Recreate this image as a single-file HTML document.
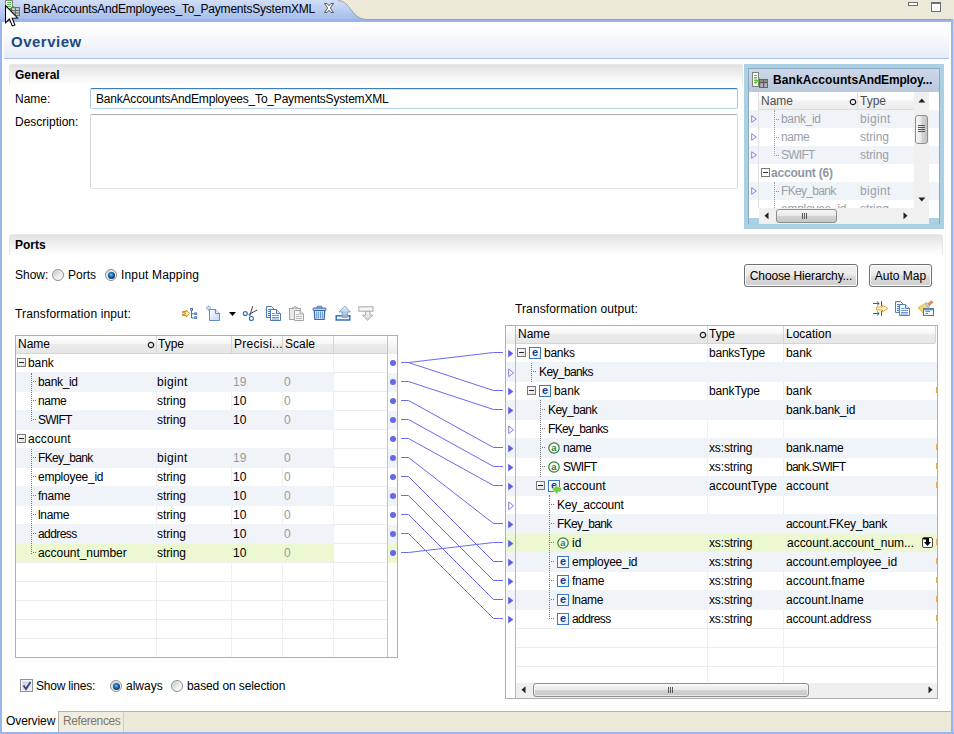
<!DOCTYPE html>
<html><head><meta charset="utf-8"><title>Overview</title><style>
*{box-sizing:border-box;margin:0;padding:0}
html,body{width:954px;height:734px;overflow:hidden;background:#ece9d8}
body{font-family:"Liberation Sans",sans-serif;font-size:12px;color:#000;position:relative}
.a{position:absolute}
.t{position:absolute;white-space:nowrap;line-height:14px;height:14px}
.g{color:#9a9a9a}
.hd{position:absolute;background:linear-gradient(#ffffff 0%,#f6f6f6 45%,#ebebeb 50%,#e6e6e6 100%);border-bottom:1px solid #d5d5d5}
.vl{position:absolute;width:1px;background:#f0f0f0}
.hl{position:absolute;height:1px;background:#ededed}
.hs{position:absolute;height:1px;width:3px;background:repeating-linear-gradient(90deg,#747474 0,#747474 1px,transparent 1px,transparent 2px)}
.sh{position:absolute;background:#f0f3f8}
.sel{position:absolute;background:#ebf8d2}
</style></head><body>
<svg class="a" style="left:0;top:0" width="954" height="22" viewBox="0 0 954 22">
<defs><linearGradient id="tg" x1="0" y1="0" x2="0" y2="1"><stop offset="0" stop-color="#d2def7"/><stop offset="1" stop-color="#9db8ec"/></linearGradient></defs>
<rect x="0" y="0" width="954" height="22" fill="#ece9d8"/>
<path d="M0,0 L338,0 C350,0 352,19 366,19 L954,19 L954,22 L0,22 Z" fill="url(#tg)"/>
<rect x="0" y="19" width="954" height="3" fill="#99b5ec"/>
<path d="M338,0.5 C350,0.5 352,19.5 366,19.5 L954,19.5" fill="none" stroke="#9c9a8c" stroke-width="1" opacity=".8"/>
</svg>
<div class="a" style="left:0;top:19px;width:2px;height:715px;background:#99b5ec"></div>
<div class="a" style="left:951px;top:19px;width:2px;height:715px;background:#99b5ec"></div>
<div class="a" style="left:953px;top:19px;width:1px;height:715px;background:#c5d3ee"></div>
<div class="a" style="left:0;top:732px;width:954px;height:2px;background:#99b5ec"></div>
<div class="a" style="left:2px;top:22px;width:949px;height:689px;background:#fff"></div>
<div class="a" style="left:4px;top:22px;width:945px;height:36px;background:linear-gradient(#ffffff 0%,#fbfcfe 30%,#e6ecf6 100%)"></div>
<div class="a" style="left:4px;top:58px;width:945px;height:1px;background:#aec2e4"></div>
<div class="t" style="left:11px;top:32px;font-size:15px;letter-spacing:.5px;font-weight:bold;color:#1c4a82;line-height:20px;height:20px">Overview</div>
<div class="t" style="left:23px;top:2px;letter-spacing:-0.21px">BankAccountsAndEmployees_To_PaymentsSystemXML</div>
<svg class="a" style="left:3px;top:0" width="18" height="18" viewBox="0 0 18 18">
<rect x="2.5" y="0.5" width="7" height="11" fill="#fff" stroke="#7a8a7a"/>
<rect x="4" y="2" width="4" height="1" fill="#4cb848"/><rect x="4" y="4" width="4" height="1" fill="#4cb848"/><rect x="4" y="6" width="4" height="1" fill="#4cb848"/>
<path d="M6,8 h4 v-2 l4,3 l-4,3 v-2 h-4z" fill="#3aa83a"/>
<rect x="8.5" y="7.5" width="8" height="8" fill="#c4c4c4" stroke="#6e6e6e"/><path d="M8.500,10.500h8M8.500,13h8M12.500,7.500v8" stroke="#6e6e6e"/>
</svg>
<svg class="a" style="left:323px;top:2px" width="12" height="12" viewBox="0 0 12 12"><path d="M1.500,1.500 H4 L6,3.800 L8,1.500 H10.500 L7.300,6 L10.500,10.500 H8 L6,8.200 L4,10.500 H1.500 L4.700,6 Z" fill="#ffffff" stroke="#5a5a5a" stroke-width="1" stroke-linejoin="round"/></svg>
<div class="a" style="left:908px;top:2px;width:10px;height:4px;border:1px solid #6f6f6f;background:#fff"></div>
<div class="a" style="left:931px;top:2px;width:10px;height:10px;border:1px solid #6f6f6f;border-top-width:2px;background:#fff"></div>
<svg class="a" style="left:5px;top:5px" width="13.6" height="23" viewBox="0 0 13 22"><path d="M0.5,0.5 L0.5,17 L4.2,13.4 L7,20 L9.5,19 L6.8,12.6 L12,12.4 Z" fill="#fff" stroke="#000" stroke-width="1"/></svg>
<div class="a" style="left:9px;top:64px;width:734px;height:21px;border-radius:3px 3px 0 0;border:1px solid #e8e8e8;border-bottom:none;background:linear-gradient(#e2e2e2 0%,#f4f4f4 60%,#ffffff 100%)"></div>
<div class="t" style="left:15px;top:68px;font-weight:bold">General</div>
<div class="t" style="left:15px;top:92px">Name:</div>
<div class="a" style="left:90px;top:88px;width:648px;height:21px;border:1px solid #a9c8e6;border-top-color:#3f7fb5;border-bottom-color:#b5d3ee;border-radius:2px;background:#fff;box-shadow:inset 0 1px 0 0 #dbe8f5"></div>
<div class="t" style="left:96px;top:92px;letter-spacing:-0.2px">BankAccountsAndEmployees_To_PaymentsSystemXML</div>
<div class="t" style="left:15px;top:115px">Description:</div>
<div class="a" style="left:90px;top:114px;width:648px;height:75px;border:1px solid #dadada;border-top-color:#ababab;border-bottom-color:#e3e3e3;border-radius:2px;background:#fff"></div>
<div class="a" style="left:744px;top:64px;width:200px;height:165px;background:#a9d1e3"></div>
<div class="a" style="left:748px;top:68px;width:192px;height:156px;background:#fff;border:1px solid #8fa9c4"></div>
<div class="a" style="left:749px;top:69px;width:190px;height:23px;background:linear-gradient(#cdd8e8,#b9c7dc)"></div>
<div class="t" style="left:773px;top:73px;font-weight:bold"><span style="letter-spacing:0.10px">BankAccounts</span><span style="letter-spacing:-0.16px">AndEmploy...</span></div>
<svg class="a" style="left:751px;top:72px" width="18" height="18" viewBox="0 0 18 18">
<rect x="1.5" y="0.5" width="6" height="14" fill="#fff" stroke="#7c837c"/>
<rect x="3" y="3" width="3" height="1" fill="#6cc24a"/><rect x="3" y="5" width="3" height="1.500" fill="#6cc24a"/><rect x="3" y="7.500" width="3" height="1.500" fill="#6cc24a"/><rect x="3" y="10" width="3" height="1.500" fill="#6cc24a"/>
<path d="M4,7.800 h4 v-2 l4,3 l-4,3 v-2 h-4z" fill="#5cc040"/>
<rect x="8.500" y="7.500" width="8" height="8" fill="#8c8c8c" stroke="#666"/><path d="M8.500,10.500h8M12.500,7.500v8" stroke="#5c5c5c"/><rect x="9.500" y="11.500" width="2.500" height="3.500" fill="#b5b5b5"/><rect x="13.500" y="11.500" width="2.500" height="3.500" fill="#b5b5b5"/>
</svg>
<div class="a" style="left:759px;top:92px;width:155px;height:18px;background:linear-gradient(#ffffff 0%,#fbfbfb 45%,#f1f1f1 55%,#ededed 100%);border-bottom:1px solid #dedede"></div>
<div class="a" style="left:857px;top:93px;width:1px;height:16px;background:#dadada"></div>
<div class="t" style="left:761px;top:94px;color:#4f4f4f">Name</div>
<div class="t" style="left:860px;top:94px;color:#4f4f4f">Type</div>
<svg class="a" style="left:849px;top:98px" width="8" height="8" viewBox="0 0 8 8"><circle cx="4" cy="4" r="2.700" fill="none" stroke="#1a1a1a" stroke-width="1.200"/></svg>
<div class="sh" style="left:749px;top:110px;width:190px;height:18px"></div>
<div class="t" style="left:781px;top:112px;color:#9aa0a8;letter-spacing:-0.34px">bank_id</div>
<div class="t" style="left:860px;top:112px;color:#9aa0a8;letter-spacing:0.32px">bigint</div>
<svg class="a" style="left:751px;top:115px" width="7" height="8" viewBox="0 0 7 8"><path d="M0.700,0.800 L5.400,4 L0.700,7.200 Z" fill="#fff" stroke="#7272ee" stroke-width=".9"/></svg>
<div class="t" style="left:781px;top:130px;color:#9aa0a8;letter-spacing:-0.44px">name</div>
<div class="t" style="left:860px;top:130px;color:#9aa0a8;letter-spacing:-0.07px">string</div>
<svg class="a" style="left:751px;top:133px" width="7" height="8" viewBox="0 0 7 8"><path d="M0.700,0.800 L5.400,4 L0.700,7.200 Z" fill="#fff" stroke="#7272ee" stroke-width=".9"/></svg>
<div class="sh" style="left:749px;top:146px;width:190px;height:18px"></div>
<div class="t" style="left:781px;top:148px;color:#9aa0a8;letter-spacing:-0.75px">SWIFT</div>
<div class="t" style="left:860px;top:148px;color:#9aa0a8;letter-spacing:-0.07px">string</div>
<svg class="a" style="left:751px;top:151px" width="7" height="8" viewBox="0 0 7 8"><path d="M0.700,0.800 L5.400,4 L0.700,7.200 Z" fill="#fff" stroke="#7272ee" stroke-width=".9"/></svg>
<div class="t" style="left:771px;top:166px;color:#8f97a3;font-weight:bold;letter-spacing:-.2px">account (6)</div>
<div class="a" style="left:761px;top:168px;width:9px;height:9px;border:1px solid #7a7a7a;background:#fff"></div><div class="a" style="left:763px;top:172px;width:5px;height:1px;background:#333"></div>
<div class="sh" style="left:749px;top:182px;width:190px;height:18px"></div>
<div class="t" style="left:781px;top:184px;color:#9aa0a8;letter-spacing:-0.69px">FKey_bank</div><div class="t" style="left:860px;top:184px;color:#9aa0a8;letter-spacing:0.32px">bigint</div>
<svg class="a" style="left:751px;top:187px" width="7" height="8" viewBox="0 0 7 8"><path d="M0.700,0.800 L5.400,4 L0.700,7.200 Z" fill="#fff" stroke="#7272ee" stroke-width=".9"/></svg>
<div class="a" style="left:759px;top:200px;width:155px;height:8px;overflow:hidden"><div class="t" style="left:22px;top:2px;color:#9aa0a8;letter-spacing:-0.25px">employee_id</div><div class="t" style="left:101px;top:2px;color:#9aa0a8;letter-spacing:-0.07px">string</div></div>
<div class="a" style="left:749px;top:218px;width:10px;height:6px;background:#a9d1e3"></div>
<div class="a" style="left:929px;top:218px;width:10px;height:6px;background:#a9d1e3"></div>
<div class="a" style="left:774px;top:110px;width:0;height:46px;border-left:1px dotted #a0a0a0"></div>
<div class="a" style="left:774px;top:182px;width:0;height:26px;border-left:1px dotted #a0a0a0"></div>
<div class="hs" style="left:776px;top:119px;opacity:.8"></div>
<div class="hs" style="left:776px;top:137px;opacity:.8"></div>
<div class="hs" style="left:776px;top:155px;opacity:.8"></div>
<div class="hs" style="left:776px;top:191px;opacity:.8"></div>
<div class="a" style="left:758px;top:92px;width:1px;height:116px;background:#e3e3e3"></div>
<div class="a" style="left:914px;top:92px;width:15px;height:132px;background:#f0f0f0"></div>
<div class="a" style="left:915px;top:115px;width:13px;height:29px;border:1px solid #8e8e8e;border-radius:3px;background:linear-gradient(90deg,#f6f6f6 0%,#e9e9e9 48%,#d4d4d4 52%,#c6c6c6 100%)"></div>
<div class="a" style="left:918px;top:125px;width:7px;height:1px;background:#555"></div>
<div class="a" style="left:918px;top:127px;width:7px;height:1px;background:#555"></div>
<div class="a" style="left:918px;top:129px;width:7px;height:1px;background:#555"></div>
<div class="a" style="left:918px;top:131px;width:7px;height:1px;background:#555"></div>
<svg class="a" style="left:918px;top:98px" width="8" height="5"><path d="M0.300,4.500 L3.800,0.500 L7.300,4.500 Z" fill="#222"/></svg>
<svg class="a" style="left:918px;top:197px" width="8" height="5"><path d="M0.300,0.500 L3.800,4.500 L7.300,0.500 Z" fill="#222"/></svg>
<div class="a" style="left:759px;top:208px;width:155px;height:16px;background:#f0f0f0"></div>
<div class="a" style="left:776px;top:209px;width:61px;height:14px;border:1px solid #8e8e8e;border-radius:3px;background:linear-gradient(#f6f6f6 0%,#e9e9e9 48%,#d4d4d4 52%,#c6c6c6 100%)"></div>
<div class="a" style="left:802px;top:213px;width:1px;height:6px;background:#555"></div>
<div class="a" style="left:804px;top:213px;width:1px;height:6px;background:#555"></div>
<div class="a" style="left:806px;top:213px;width:1px;height:6px;background:#555"></div>
<svg class="a" style="left:764px;top:212px" width="5" height="8"><path d="M4.500,0.300 L0.500,3.800 L4.500,7.300 Z" fill="#222"/></svg>
<svg class="a" style="left:903px;top:212px" width="5" height="8"><path d="M0.500,0.300 L4.500,3.800 L0.500,7.300 Z" fill="#222"/></svg>
<div class="a" style="left:9px;top:234px;width:934px;height:21px;border-radius:3px 3px 0 0;border:1px solid #e8e8e8;border-bottom:none;background:linear-gradient(#e2e2e2 0%,#f4f4f4 60%,#ffffff 100%)"></div>
<div class="t" style="left:15px;top:238px;font-weight:bold">Ports</div>
<div class="t" style="left:15px;top:268px">Show:</div>
<div class="a" style="left:52px;top:269px;width:12px;height:12px;border:1px solid #8a8c8e;border-radius:50%;background:linear-gradient(135deg,#c3c8cd 10%,#e6e8ea 50%,#fafafa 85%);box-shadow:inset 0 0 0 1px rgba(255,255,255,.55)"></div>
<div class="t" style="left:68px;top:268px">Ports</div>
<div class="a" style="left:105px;top:269px;width:12px;height:12px;border:1px solid #8a8c8e;border-radius:50%;background:linear-gradient(135deg,#c3c8cd 10%,#e6e8ea 50%,#fafafa 85%);box-shadow:inset 0 0 0 1px rgba(255,255,255,.55)"></div>
<div class="a" style="left:107.5px;top:271.5px;width:7px;height:7px;border-radius:50%;background:radial-gradient(circle at 45% 40%,#6fd2f5 0%,#2478be 30%,#0f3f78 62%,#0a2548 100%)"></div>
<div class="t" style="left:121px;top:268px;letter-spacing:.16px">Input Mapping</div>
<div class="a" style="left:744px;top:264px;width:114px;height:23px;border:1px solid #707070;border-radius:3px;background:linear-gradient(#f2f2f2 0%,#ebebeb 48%,#dddddd 52%,#cfcfcf 100%);box-shadow:inset 0 0 0 1px #fcfcfc;text-align:center;line-height:23px;letter-spacing:-0.15px">Choose Hierarchy...</div>
<div class="a" style="left:869px;top:264px;width:63px;height:23px;border:1px solid #707070;border-radius:3px;background:linear-gradient(#f2f2f2 0%,#ebebeb 48%,#dddddd 52%,#cfcfcf 100%);box-shadow:inset 0 0 0 1px #fcfcfc;text-align:center;line-height:23px;letter-spacing:0px">Auto Map</div>
<div class="t" style="left:15px;top:307px;letter-spacing:.14px">Transformation input:</div>
<div class="t" style="left:515px;top:302px;letter-spacing:.12px">Transformation output:</div>
<svg class="a" style="left:181px;top:305px" width="17" height="16" viewBox="0 0 17 16" ><path d="M1.500,6.500 H5.300 V5 L8.600,8.500 L5.300,12 V10.500 H1.500 V9.300 H4.300 V7.700 H1.500 Z" fill="#fff3a8" stroke="#c08418" stroke-width=".9" stroke-linejoin="miter"/><path d="M10.500,5.500 V13 H13.500 M10.500,8.800 H13.500" fill="none" stroke="#4472b8" stroke-width="1"/><g fill="#4472b8"><rect x="9.200" y="3" width="2.800" height="2.800"/><rect x="13.300" y="7.400" width="2.800" height="2.600"/><rect x="13.300" y="11.300" width="2.800" height="2.600"/></g><g fill="#b9cdea"><rect x="10.100" y="3.900" width="1" height="1"/><rect x="14.200" y="8.200" width="1" height="1"/><rect x="14.200" y="12.100" width="1" height="1"/></g></svg>
<svg class="a" style="left:205px;top:304px" width="16" height="18" viewBox="0 0 16 18" ><defs><linearGradient id="nd" x1="0" y1="0" x2="1" y2="1"><stop offset="0" stop-color="#ffffff"/><stop offset="1" stop-color="#c4d6f0"/></linearGradient></defs><path d="M4.500,5.500 H10.500 L14.500,9.500 V16.500 H4.500 Z" fill="url(#nd)" stroke="#5580b8" stroke-width=".9"/><path d="M10.500,5.500 V9.500 H14.500" fill="#e9f0fa" stroke="#5580b8" stroke-width=".9"/><path d="M3.500,1.500 V6.500 M1,4 H6 M1.700,2.200 L5.300,5.800 M5.300,2.200 L1.700,5.800" stroke="#5a90d0" stroke-width=".8"/><rect x="2.700" y="3.200" width="1.600" height="1.600" fill="#fff"/></svg>
<svg class="a" style="left:229px;top:312px" width="7" height="4" viewBox="0 0 7 4" ><path d="M0,0 H7 L3.500,4 Z" fill="#000"/></svg>
<svg class="a" style="left:242px;top:305px" width="17" height="17" viewBox="0 0 17 17" ><path d="M10.700,1.200 L7.600,11.200 M15.200,5 L6.500,9.600" stroke="#3a4056" stroke-width="1" fill="none"/><circle cx="3.300" cy="8.600" r="2" fill="#fff" stroke="#2f6fb5" stroke-width="1.100"/><circle cx="9.400" cy="13.500" r="2" fill="#fff" stroke="#2f6fb5" stroke-width="1.100"/></svg>
<svg class="a" style="left:266px;top:305px" width="16" height="17" viewBox="0 0 16 17" ><path d="M0.500,1.500 H5.500 L8.500,4.500 V12.500 H0.500 Z" fill="#f3f7fd" stroke="#4b78b3"/><path d="M2,4.500H5M2,6.500H4M2,8.500H4M2,10.500H4" stroke="#4b78b3"/><path d="M4.500,4.500 H10.500 L14.500,8.500 V15.500 H4.500 Z" fill="#fbfdff" stroke="#4b78b3"/><path d="M10.500,4.500 V8.500 H14.500" fill="#dbe7f7" stroke="#4b78b3"/><path d="M6,8.500H9.500M6,10.500H13M6,12.500H13M6,14H13" stroke="#5c8cd0" stroke-width=".9"/></svg>
<svg class="a" style="left:289px;top:305px" width="16" height="17" viewBox="0 0 16 17" ><rect x="0.500" y="3.500" width="11" height="11" fill="#e9e9e9" stroke="#a3a3a3"/><path d="M3.500,3.500 V2.500 H4.700 Q6,0.300 7.300,2.500 H8.500 V3.500" fill="#dcdcdc" stroke="#a3a3a3"/><path d="M5.500,5.500 H11 L14.500,9 V15.500 H5.500 Z" fill="#f7f7f7" stroke="#a3a3a3"/><path d="M11,5.500 V9 H14.500" fill="#e6e6e6" stroke="#a3a3a3"/><path d="M7,9.500H10M7,11.500H13M7,13.500H13" stroke="#b5b5b5" stroke-width=".9"/></svg>
<svg class="a" style="left:312px;top:305px" width="15" height="16" viewBox="0 0 15 16" ><rect x="5" y="1.200" width="5" height="2" rx="0.800" fill="#b7cdea" stroke="#3b69ad" stroke-width=".8"/><rect x="1" y="3" width="13" height="2.500" rx="0.800" fill="#b7cdea" stroke="#3b69ad" stroke-width="1"/><path d="M2.300,5.500 H12.700 L12.200,14.500 H2.800 Z" fill="#dbe8fa" stroke="#3b69ad" stroke-width="1.200"/><path d="M4.700,6.500V13.500M6.600,6.500V13.500M8.500,6.500V13.500M10.400,6.500V13.500" stroke="#5c8cd0" stroke-width=".9"/></svg>
<svg class="a" style="left:335px;top:305px" width="17" height="17" viewBox="0 0 17 17" ><defs><linearGradient id="ua" x1="0" y1="0" x2="0" y2="1"><stop offset="0" stop-color="#eef4fb"/><stop offset="1" stop-color="#8fb0da"/></linearGradient></defs><rect x="1.200" y="10.800" width="13.600" height="4.200" fill="#eaf1fa" stroke="#2f66b8" stroke-width="1.400"/><path d="M9.700,1 L15.300,7 H12.300 V12.300 H7.100 V7 H4.100 Z" fill="url(#ua)" stroke="#7f9abf" stroke-width=".9"/></svg>
<svg class="a" style="left:358px;top:305px" width="16" height="17" viewBox="0 0 16 17" ><defs><linearGradient id="da" x1="0" y1="0" x2="0" y2="1"><stop offset="0" stop-color="#fafafa"/><stop offset="1" stop-color="#d2d2d2"/></linearGradient></defs><path d="M7.600,6 H12 V10.200 H15 L9.500,15.300 L4.300,10.200 H7.600 Z" fill="url(#da)" stroke="#a8a8a8" stroke-width=".9"/><rect x="0.800" y="1.800" width="14.200" height="4.400" fill="#f6f6f6" stroke="#a9a9a9" stroke-width="1"/></svg>
<svg class="a" style="left:872px;top:300px" width="17" height="17" viewBox="0 0 17 17" ><path d="M1,3.500 H7 M5,1.500 L7.200,3.500 L5,5.500 M9.500,1 V6" fill="none" stroke="#3e5f8a" stroke-width="1"/><path d="M1,13.500 H7 M5,11.500 L7.200,13.500 L5,15.500 M9.500,11 V16" fill="none" stroke="#3e5f8a" stroke-width="1"/><path d="M4.500,7 H10.500 V5.200 L15.800,8.500 L10.500,11.800 V10 H4.500 Z" fill="#fff6c4" stroke="#dc9a28" stroke-width=".9"/></svg>
<svg class="a" style="left:895px;top:300px" width="16" height="17" viewBox="0 0 16 17" ><path d="M0.500,1.500 H5.500 L8.500,4.500 V12.500 H0.500 Z" fill="#f3f7fd" stroke="#5580b5"/><path d="M2,4.500H5M2,6.500H4M2,8.500H4M2,10.500H4" stroke="#4b78b3"/><path d="M4.500,4.500 H10.500 L14.500,8.500 V15.500 H4.500 Z" fill="#fbfdff" stroke="#5580b5"/><path d="M10.500,4.500 V8.500 H14.500" fill="#dbe7f7" stroke="#5580b5"/><path d="M6,8.500H9.500M6,10.500H13M6,12.500H13M6,14H13" stroke="#5c8cd0" stroke-width=".9"/></svg>
<svg class="a" style="left:917px;top:300px" width="18" height="17" viewBox="0 0 18 17" ><path d="M1,8 L8,3.500 L11.500,7.500 L6,13 Q4,10 1,8 Z" fill="#f5d77a" stroke="#d8a838" stroke-width=".8"/><path d="M8,3.500 L9.500,2.200 L13,6 L11.500,7.500 Z" fill="#c9cdd3" stroke="#9aa0a8" stroke-width=".6"/><path d="M11,3.500 L14.500,0.800 L16,2.300 L12.500,5.300 Z" fill="#f08a4a" stroke="#c86428" stroke-width=".6"/><rect x="6.500" y="8.500" width="10" height="7" fill="#f4f8fd" stroke="#4b78b3"/><rect x="6.500" y="8.500" width="10" height="1.500" fill="#6f98d0" stroke="#4b78b3" stroke-width=".6"/><path d="M8.500,11.500H13M8.500,13.500H11" stroke="#5c8cd0"/></svg>
<div class="a" style="left:15px;top:335px;width:383px;height:323px;background:#fff;border:1px solid #b0b0b0"></div>
<div class="hd" style="left:16px;top:336px;width:372px;height:18px"></div>
<div class="a" style="left:388px;top:336px;width:9px;height:18px;background:linear-gradient(#fff,#ebebeb)"></div>
<div class="a" style="left:156px;top:336px;width:1px;height:17px;background:#d5d5d5"></div>
<div class="vl" style="left:156px;top:354px;height:303px"></div>
<div class="a" style="left:231px;top:336px;width:1px;height:17px;background:#d5d5d5"></div>
<div class="vl" style="left:231px;top:354px;height:303px"></div>
<div class="a" style="left:282px;top:336px;width:1px;height:17px;background:#d5d5d5"></div>
<div class="vl" style="left:282px;top:354px;height:303px"></div>
<div class="a" style="left:333px;top:336px;width:1px;height:17px;background:#d5d5d5"></div>
<div class="vl" style="left:333px;top:354px;height:303px"></div>
<div class="a" style="left:387px;top:336px;width:1px;height:321px;background:#c4c4c4"></div>
<div class="t" style="left:18px;top:337px">Name</div><div class="t" style="left:158px;top:337px">Type</div><div class="t" style="left:234px;top:337px;letter-spacing:.3px">Precisi...</div><div class="t" style="left:285px;top:337px">Scale</div>
<svg class="a" style="left:147px;top:341px" width="8" height="8" viewBox="0 0 8 8"><circle cx="4" cy="4" r="2.700" fill="none" stroke="#1a1a1a" stroke-width="1.200"/></svg>
<div class="a" style="left:16px;top:354px;width:317px;height:18px;background:#fff"></div>
<div class="a" style="left:17px;top:358px;width:9px;height:9px;border:1px solid #7a7a7a;background:linear-gradient(135deg,#fff,#e0e0e0)"></div><div class="a" style="left:19px;top:362px;width:5px;height:1px;background:#222"></div>
<div class="t" style="left:28px;top:356px;letter-spacing:-0.11px">bank</div>
<div class="a" style="left:390px;top:360px;width:6px;height:6px;border-radius:50%;background:#6767ec"></div>
<div class="sh" style="left:16px;top:372px;width:317px;height:20px"></div>
<div class="sh" style="left:388px;top:373px;width:9px;height:19px"></div>
<div class="t" style="left:38px;top:375px;letter-spacing:-0.34px">bank_id</div>
<div class="t" style="left:157px;top:375px;letter-spacing:0.32px">bigint</div>
<div class="t g" style="left:233px;top:375px">19</div>
<div class="t g" style="left:284px;top:375px">0</div>
<div class="hs" style="left:33px;top:381px"></div>
<div class="a" style="left:390px;top:379px;width:6px;height:6px;border-radius:50%;background:#6767ec"></div>
<div class="t" style="left:38px;top:394px;letter-spacing:-0.44px">name</div>
<div class="t" style="left:157px;top:394px;letter-spacing:-0.07px">string</div>
<div class="t" style="left:233px;top:394px">10</div>
<div class="t g" style="left:284px;top:394px">0</div>
<div class="hs" style="left:33px;top:400px"></div>
<div class="a" style="left:390px;top:398px;width:6px;height:6px;border-radius:50%;background:#6767ec"></div>
<div class="sh" style="left:16px;top:410px;width:317px;height:20px"></div>
<div class="sh" style="left:388px;top:411px;width:9px;height:19px"></div>
<div class="t" style="left:38px;top:413px;letter-spacing:-0.75px">SWIFT</div>
<div class="t" style="left:157px;top:413px;letter-spacing:-0.07px">string</div>
<div class="t" style="left:233px;top:413px">10</div>
<div class="t g" style="left:284px;top:413px">0</div>
<div class="hs" style="left:33px;top:419px"></div>
<div class="a" style="left:390px;top:417px;width:6px;height:6px;border-radius:50%;background:#6767ec"></div>
<div class="a" style="left:16px;top:430px;width:317px;height:18px;background:#fff"></div>
<div class="a" style="left:17px;top:434px;width:9px;height:9px;border:1px solid #7a7a7a;background:linear-gradient(135deg,#fff,#e0e0e0)"></div><div class="a" style="left:19px;top:438px;width:5px;height:1px;background:#222"></div>
<div class="t" style="left:28px;top:432px;letter-spacing:0.08px">account</div>
<div class="a" style="left:390px;top:436px;width:6px;height:6px;border-radius:50%;background:#6767ec"></div>
<div class="sh" style="left:16px;top:448px;width:317px;height:20px"></div>
<div class="sh" style="left:388px;top:449px;width:9px;height:19px"></div>
<div class="t" style="left:38px;top:451px;letter-spacing:-0.69px">FKey_bank</div>
<div class="t" style="left:157px;top:451px;letter-spacing:0.32px">bigint</div>
<div class="t g" style="left:233px;top:451px">19</div>
<div class="t g" style="left:284px;top:451px">0</div>
<div class="hs" style="left:33px;top:457px"></div>
<div class="a" style="left:390px;top:455px;width:6px;height:6px;border-radius:50%;background:#6767ec"></div>
<div class="t" style="left:38px;top:470px;letter-spacing:-0.25px">employee_id</div>
<div class="t" style="left:157px;top:470px;letter-spacing:-0.07px">string</div>
<div class="t" style="left:233px;top:470px">10</div>
<div class="t g" style="left:284px;top:470px">0</div>
<div class="hs" style="left:33px;top:476px"></div>
<div class="a" style="left:390px;top:474px;width:6px;height:6px;border-radius:50%;background:#6767ec"></div>
<div class="sh" style="left:16px;top:486px;width:317px;height:20px"></div>
<div class="sh" style="left:388px;top:487px;width:9px;height:19px"></div>
<div class="t" style="left:38px;top:489px;letter-spacing:-0.24px">fname</div>
<div class="t" style="left:157px;top:489px;letter-spacing:-0.07px">string</div>
<div class="t" style="left:233px;top:489px">10</div>
<div class="t g" style="left:284px;top:489px">0</div>
<div class="hs" style="left:33px;top:495px"></div>
<div class="a" style="left:390px;top:493px;width:6px;height:6px;border-radius:50%;background:#6767ec"></div>
<div class="t" style="left:38px;top:508px;letter-spacing:-0.30px">lname</div>
<div class="t" style="left:157px;top:508px;letter-spacing:-0.07px">string</div>
<div class="t" style="left:233px;top:508px">10</div>
<div class="t g" style="left:284px;top:508px">0</div>
<div class="hs" style="left:33px;top:514px"></div>
<div class="a" style="left:390px;top:512px;width:6px;height:6px;border-radius:50%;background:#6767ec"></div>
<div class="sh" style="left:16px;top:524px;width:317px;height:20px"></div>
<div class="sh" style="left:388px;top:525px;width:9px;height:19px"></div>
<div class="t" style="left:38px;top:527px;letter-spacing:-0.58px">address</div>
<div class="t" style="left:157px;top:527px;letter-spacing:-0.07px">string</div>
<div class="t" style="left:233px;top:527px">10</div>
<div class="t g" style="left:284px;top:527px">0</div>
<div class="hs" style="left:33px;top:533px"></div>
<div class="a" style="left:390px;top:531px;width:6px;height:6px;border-radius:50%;background:#6767ec"></div>
<div class="sel" style="left:16px;top:544px;width:317px;height:18px"></div>
<div class="sel" style="left:388px;top:544px;width:9px;height:19px"></div>
<div class="t" style="left:38px;top:546px;letter-spacing:-0.05px">account_number</div>
<div class="t" style="left:157px;top:546px;letter-spacing:-0.07px">string</div>
<div class="t" style="left:233px;top:546px">10</div>
<div class="t g" style="left:284px;top:546px">0</div>
<div class="hs" style="left:33px;top:552px"></div>
<div class="a" style="left:390px;top:550px;width:6px;height:6px;border-radius:50%;background:#6767ec"></div>
<div class="hl" style="left:16px;top:562px;width:371px"></div>
<div class="hl" style="left:16px;top:581px;width:371px"></div>
<div class="hl" style="left:16px;top:600px;width:371px"></div>
<div class="hl" style="left:16px;top:619px;width:371px"></div>
<div class="hl" style="left:16px;top:638px;width:371px"></div>
<div class="hl" style="left:334px;top:372px;width:53px"></div>
<div class="hl" style="left:334px;top:391px;width:53px"></div>
<div class="hl" style="left:334px;top:410px;width:53px"></div>
<div class="hl" style="left:334px;top:429px;width:53px"></div>
<div class="hl" style="left:334px;top:448px;width:53px"></div>
<div class="hl" style="left:334px;top:467px;width:53px"></div>
<div class="hl" style="left:334px;top:486px;width:53px"></div>
<div class="hl" style="left:334px;top:505px;width:53px"></div>
<div class="hl" style="left:334px;top:524px;width:53px"></div>
<div class="hl" style="left:334px;top:543px;width:53px"></div>
<div class="hl" style="left:334px;top:562px;width:53px"></div>
<div class="a" style="left:31px;top:373px;width:0;height:48px;border-left:1px dotted #747474"></div>
<div class="a" style="left:31px;top:449px;width:0;height:105px;border-left:1px dotted #747474"></div>
<svg class="a" style="left:398px;top:335px" width="108" height="330" viewBox="398 335 108 330"><g fill="none" stroke="#6a6aee" stroke-width="1"><path d="M401,362.5 L408.500,362.5 L493.500,352.5 L503,352.5"/><path d="M401,362.5 L408.500,362.5 L493.500,390.5 L503,390.5"/><path d="M401,381.5 L408.500,381.5 L493.500,409.5 L503,409.5"/><path d="M401,400.5 L408.500,400.5 L493.500,447.5 L503,447.5"/><path d="M401,419.5 L408.500,419.5 L493.500,466.5 L503,466.5"/><path d="M401,438.5 L408.500,438.5 L493.500,485.5 L503,485.5"/><path d="M401,457.5 L408.500,457.5 L493.500,523.5 L503,523.5"/><path d="M401,476.5 L408.500,476.5 L493.500,561.5 L503,561.5"/><path d="M401,495.5 L408.500,495.5 L493.500,580.5 L503,580.5"/><path d="M401,514.5 L408.500,514.5 L493.500,599.5 L503,599.5"/><path d="M401,533.5 L408.500,533.5 L493.500,618.5 L503,618.5"/><path d="M401,552.5 L408.500,552.5 L493.500,542.5 L503,542.5"/></g></svg>
<div class="a" style="left:505px;top:325px;width:433px;height:374px;background:#fff;border:1px solid #b0b0b0"></div>
<div class="a" style="left:506px;top:326px;width:9px;height:18px;background:linear-gradient(#fff,#ebebeb)"></div>
<div class="hd" style="left:516px;top:326px;width:419px;height:18px"></div>
<div class="a" style="left:707px;top:326px;width:1px;height:17px;background:#d5d5d5"></div>
<div class="vl" style="left:707px;top:344px;height:338px"></div>
<div class="a" style="left:783px;top:326px;width:1px;height:17px;background:#d5d5d5"></div>
<div class="vl" style="left:783px;top:344px;height:338px"></div>
<div class="a" style="left:935px;top:326px;width:1px;height:17px;background:#d5d5d5"></div>
<div class="t" style="left:518px;top:327px">Name</div><div class="t" style="left:709px;top:327px">Type</div><div class="t" style="left:786px;top:327px">Location</div>
<svg class="a" style="left:699px;top:331px" width="8" height="8" viewBox="0 0 8 8"><circle cx="4" cy="4" r="2.700" fill="none" stroke="#1a1a1a" stroke-width="1.200"/></svg>
<div class="a" style="left:517px;top:348px;width:9px;height:9px;border:1px solid #7a7a7a;background:linear-gradient(135deg,#fff,#e0e0e0)"></div><div class="a" style="left:519px;top:352px;width:5px;height:1px;background:#222"></div>
<div class="a" style="left:529px;top:347px;width:12px;height:12px;border:1px solid #3a7ac2;background:linear-gradient(135deg,#ffffff 30%,#dcebfa);color:#17388c;font-weight:bold;font-size:11px;line-height:9px;text-align:center">e</div>
<div class="t" style="left:544px;top:346px;letter-spacing:-0.28px">banks</div>
<div class="t" style="left:709px;top:346px;letter-spacing:-0.23px">banksType</div>
<div class="t" style="left:786px;top:346px;letter-spacing:-0.11px">bank</div>
<svg class="a" style="left:508px;top:349px" width="6" height="9" viewBox="0 0 6 9"><path d="M0.300,1.100 L5.100,4.600 L0.300,8.100 Z" fill="#5c5cea" stroke="#5c5cea" stroke-width=".4"/></svg>
<div class="sh" style="left:506px;top:362px;width:431px;height:20px"></div>
<div class="t" style="left:539px;top:365px;letter-spacing:-0.61px">Key_banks</div>
<svg class="a" style="left:508px;top:368px" width="7" height="10" viewBox="0 0 7 10"><path d="M0.700,1 L5.600,4.800 L0.700,8.600 Z" fill="#fff" stroke="#7272ee" stroke-width=".9"/></svg>
<div class="a" style="left:527px;top:386px;width:9px;height:9px;border:1px solid #7a7a7a;background:linear-gradient(135deg,#fff,#e0e0e0)"></div><div class="a" style="left:529px;top:390px;width:5px;height:1px;background:#222"></div>
<div class="a" style="left:539px;top:385px;width:12px;height:12px;border:1px solid #3a7ac2;background:linear-gradient(135deg,#ffffff 30%,#dcebfa);color:#17388c;font-weight:bold;font-size:11px;line-height:9px;text-align:center">e</div>
<div class="t" style="left:554px;top:384px;letter-spacing:-0.11px">bank</div>
<div class="t" style="left:709px;top:384px;letter-spacing:-0.15px">bankType</div>
<div class="t" style="left:786px;top:384px;letter-spacing:-0.11px">bank</div>
<svg class="a" style="left:508px;top:387px" width="6" height="9" viewBox="0 0 6 9"><path d="M0.300,1.100 L5.100,4.600 L0.300,8.100 Z" fill="#5c5cea" stroke="#5c5cea" stroke-width=".4"/></svg>
<div class="a" style="left:936px;top:387px;width:1px;height:6px;background:#f0ac54"></div>
<div class="sh" style="left:506px;top:400px;width:431px;height:20px"></div>
<div class="t" style="left:548px;top:403px;letter-spacing:-0.57px">Key_bank</div>
<div class="t" style="left:786px;top:403px;letter-spacing:-0.17px">bank.bank_id</div>
<svg class="a" style="left:508px;top:406px" width="6" height="9" viewBox="0 0 6 9"><path d="M0.300,1.100 L5.100,4.600 L0.300,8.100 Z" fill="#5c5cea" stroke="#5c5cea" stroke-width=".4"/></svg>
<div class="t" style="left:548px;top:422px;letter-spacing:-0.69px">FKey_banks</div>
<svg class="a" style="left:508px;top:425px" width="7" height="10" viewBox="0 0 7 10"><path d="M0.700,1 L5.600,4.800 L0.700,8.600 Z" fill="#fff" stroke="#7272ee" stroke-width=".9"/></svg>
<div class="sh" style="left:506px;top:438px;width:431px;height:20px"></div>
<svg class="a" style="left:548px;top:442px" width="12" height="12" viewBox="0 0 12 12"><circle cx="6" cy="6" r="5.200" fill="#fff" stroke="#2f7d32" stroke-width="1.200"/><text x="6" y="9" text-anchor="middle" font-family="Liberation Sans,sans-serif" font-size="9.500" font-weight="bold" fill="#2f7d32">a</text></svg>
<div class="t" style="left:563px;top:441px;letter-spacing:-0.44px">name</div>
<div class="t" style="left:709px;top:441px;letter-spacing:-0.15px">xs:string</div>
<div class="t" style="left:786px;top:441px;letter-spacing:-0.21px">bank.name</div>
<svg class="a" style="left:508px;top:444px" width="6" height="9" viewBox="0 0 6 9"><path d="M0.300,1.100 L5.100,4.600 L0.300,8.100 Z" fill="#5c5cea" stroke="#5c5cea" stroke-width=".4"/></svg>
<div class="a" style="left:936px;top:444px;width:1px;height:6px;background:#f0ac54"></div>
<svg class="a" style="left:548px;top:461px" width="12" height="12" viewBox="0 0 12 12"><circle cx="6" cy="6" r="5.200" fill="#fff" stroke="#2f7d32" stroke-width="1.200"/><text x="6" y="9" text-anchor="middle" font-family="Liberation Sans,sans-serif" font-size="9.500" font-weight="bold" fill="#2f7d32">a</text></svg>
<div class="t" style="left:563px;top:460px;letter-spacing:-0.75px">SWIFT</div>
<div class="t" style="left:709px;top:460px;letter-spacing:-0.15px">xs:string</div>
<div class="t" style="left:786px;top:460px;letter-spacing:-0.74px">bank.SWIFT</div>
<svg class="a" style="left:508px;top:463px" width="6" height="9" viewBox="0 0 6 9"><path d="M0.300,1.100 L5.100,4.600 L0.300,8.100 Z" fill="#5c5cea" stroke="#5c5cea" stroke-width=".4"/></svg>
<div class="a" style="left:936px;top:463px;width:1px;height:6px;background:#f0ac54"></div>
<div class="sh" style="left:506px;top:476px;width:431px;height:20px"></div>
<div class="a" style="left:536px;top:481px;width:9px;height:9px;border:1px solid #7a7a7a;background:linear-gradient(135deg,#fff,#e0e0e0)"></div><div class="a" style="left:538px;top:485px;width:5px;height:1px;background:#222"></div>
<div class="a" style="left:548px;top:480px;width:12px;height:12px;border:1px solid #3a7ac2;background:linear-gradient(135deg,#ffffff 30%,#dcebfa);color:#17388c;font-weight:bold;font-size:11px;line-height:9px;text-align:center">e</div>
<div class="t" style="left:563px;top:479px;letter-spacing:0.08px">account</div>
<div class="t" style="left:709px;top:479px;letter-spacing:-0.00px">accountType</div>
<div class="t" style="left:786px;top:479px;letter-spacing:0.08px">account</div>
<svg class="a" style="left:508px;top:482px" width="6" height="9" viewBox="0 0 6 9"><path d="M0.300,1.100 L5.100,4.600 L0.300,8.100 Z" fill="#5c5cea" stroke="#5c5cea" stroke-width=".4"/></svg>
<div class="a" style="left:936px;top:482px;width:1px;height:6px;background:#f0ac54"></div>
<div class="t" style="left:557px;top:498px;letter-spacing:-0.26px">Key_account</div>
<svg class="a" style="left:508px;top:501px" width="7" height="10" viewBox="0 0 7 10"><path d="M0.700,1 L5.600,4.800 L0.700,8.600 Z" fill="#fff" stroke="#7272ee" stroke-width=".9"/></svg>
<div class="sh" style="left:506px;top:514px;width:431px;height:20px"></div>
<div class="t" style="left:557px;top:517px;letter-spacing:-0.69px">FKey_bank</div>
<div class="t" style="left:786px;top:517px;letter-spacing:-0.30px">account.FKey_bank</div>
<svg class="a" style="left:508px;top:520px" width="6" height="9" viewBox="0 0 6 9"><path d="M0.300,1.100 L5.100,4.600 L0.300,8.100 Z" fill="#5c5cea" stroke="#5c5cea" stroke-width=".4"/></svg>
<div class="sel" style="left:506px;top:534px;width:431px;height:18px"></div>
<svg class="a" style="left:557px;top:537px" width="12" height="12" viewBox="0 0 12 12"><circle cx="6" cy="6" r="5.200" fill="#fff" stroke="#2f7d32" stroke-width="1.200"/><text x="6" y="9" text-anchor="middle" font-family="Liberation Sans,sans-serif" font-size="9.500" font-weight="bold" fill="#2f7d32">a</text></svg>
<div class="t" style="left:572px;top:536px;letter-spacing:0.16px">id</div>
<div class="t" style="left:709px;top:536px;letter-spacing:-0.15px">xs:string</div>
<div class="t" style="left:787px;top:536px;letter-spacing:-0.02px">account.account_num...</div>
<svg class="a" style="left:508px;top:539px" width="6" height="9" viewBox="0 0 6 9"><path d="M0.300,1.100 L5.100,4.600 L0.300,8.100 Z" fill="#5c5cea" stroke="#5c5cea" stroke-width=".4"/></svg>
<div class="a" style="left:936px;top:539px;width:1px;height:6px;background:#f0ac54"></div>
<div class="sh" style="left:506px;top:552px;width:431px;height:20px"></div>
<div class="a" style="left:557px;top:556px;width:12px;height:12px;border:1px solid #3a7ac2;background:linear-gradient(135deg,#ffffff 30%,#dcebfa);color:#17388c;font-weight:bold;font-size:11px;line-height:9px;text-align:center">e</div>
<div class="t" style="left:572px;top:555px;letter-spacing:-0.25px">employee_id</div>
<div class="t" style="left:709px;top:555px;letter-spacing:-0.15px">xs:string</div>
<div class="t" style="left:786px;top:555px;letter-spacing:-0.13px">account.employee_id</div>
<svg class="a" style="left:508px;top:558px" width="6" height="9" viewBox="0 0 6 9"><path d="M0.300,1.100 L5.100,4.600 L0.300,8.100 Z" fill="#5c5cea" stroke="#5c5cea" stroke-width=".4"/></svg>
<div class="a" style="left:936px;top:558px;width:1px;height:6px;background:#f0ac54"></div>
<div class="a" style="left:557px;top:575px;width:12px;height:12px;border:1px solid #3a7ac2;background:linear-gradient(135deg,#ffffff 30%,#dcebfa);color:#17388c;font-weight:bold;font-size:11px;line-height:9px;text-align:center">e</div>
<div class="t" style="left:572px;top:574px;letter-spacing:-0.24px">fname</div>
<div class="t" style="left:709px;top:574px;letter-spacing:-0.15px">xs:string</div>
<div class="t" style="left:786px;top:574px;letter-spacing:-0.01px">account.fname</div>
<svg class="a" style="left:508px;top:577px" width="6" height="9" viewBox="0 0 6 9"><path d="M0.300,1.100 L5.100,4.600 L0.300,8.100 Z" fill="#5c5cea" stroke="#5c5cea" stroke-width=".4"/></svg>
<div class="a" style="left:936px;top:577px;width:1px;height:6px;background:#f0ac54"></div>
<div class="sh" style="left:506px;top:590px;width:431px;height:20px"></div>
<div class="a" style="left:557px;top:594px;width:12px;height:12px;border:1px solid #3a7ac2;background:linear-gradient(135deg,#ffffff 30%,#dcebfa);color:#17388c;font-weight:bold;font-size:11px;line-height:9px;text-align:center">e</div>
<div class="t" style="left:572px;top:593px;letter-spacing:-0.30px">lname</div>
<div class="t" style="left:709px;top:593px;letter-spacing:-0.15px">xs:string</div>
<div class="t" style="left:786px;top:593px;letter-spacing:-0.04px">account.lname</div>
<svg class="a" style="left:508px;top:596px" width="6" height="9" viewBox="0 0 6 9"><path d="M0.300,1.100 L5.100,4.600 L0.300,8.100 Z" fill="#5c5cea" stroke="#5c5cea" stroke-width=".4"/></svg>
<div class="a" style="left:936px;top:596px;width:1px;height:6px;background:#f0ac54"></div>
<div class="a" style="left:557px;top:613px;width:12px;height:12px;border:1px solid #3a7ac2;background:linear-gradient(135deg,#ffffff 30%,#dcebfa);color:#17388c;font-weight:bold;font-size:11px;line-height:9px;text-align:center">e</div>
<div class="t" style="left:572px;top:612px;letter-spacing:-0.58px">address</div>
<div class="t" style="left:709px;top:612px;letter-spacing:-0.15px">xs:string</div>
<div class="t" style="left:786px;top:612px;letter-spacing:-0.19px">account.address</div>
<svg class="a" style="left:508px;top:615px" width="6" height="9" viewBox="0 0 6 9"><path d="M0.300,1.100 L5.100,4.600 L0.300,8.100 Z" fill="#5c5cea" stroke="#5c5cea" stroke-width=".4"/></svg>
<div class="a" style="left:936px;top:615px;width:1px;height:6px;background:#f0ac54"></div>
<div class="hl" style="left:516px;top:628px;width:421px"></div>
<div class="hl" style="left:516px;top:647px;width:421px"></div>
<div class="hl" style="left:516px;top:666px;width:421px"></div>
<div class="a" style="left:531px;top:363px;width:0;height:19px;border-left:1px dotted #747474"></div>
<div class="hs" style="left:533px;top:371px"></div>
<div class="a" style="left:540px;top:400px;width:0;height:77px;border-left:1px dotted #747474"></div>
<div class="hs" style="left:542px;top:409px"></div>
<div class="hs" style="left:542px;top:428px"></div>
<div class="hs" style="left:542px;top:447px"></div>
<div class="hs" style="left:542px;top:466px"></div>
<div class="a" style="left:549px;top:495px;width:0;height:124px;border-left:1px dotted #747474"></div>
<div class="hs" style="left:551px;top:504px"></div>
<div class="hs" style="left:551px;top:523px"></div>
<div class="hs" style="left:551px;top:542px"></div>
<div class="hs" style="left:551px;top:561px"></div>
<div class="hs" style="left:551px;top:580px"></div>
<div class="hs" style="left:551px;top:599px"></div>
<div class="hs" style="left:551px;top:618px"></div>
<svg class="a" style="left:552px;top:484px" width="10" height="10" viewBox="0 0 10 10"><path d="M1,5.500 L5,1.500 V3.800 H8.500 Q9.500,5.500 8.500,7.200 H5 V9.500 Z" fill="#74d040" stroke="#f4fbe9" stroke-width="1.600"/><path d="M1,5.500 L5,1.500 V3.800 H8.500 Q9.500,5.500 8.500,7.200 H5 V9.500 Z" fill="#74d040" stroke="#4fa828" stroke-width=".5"/></svg>
<div class="a" style="left:922px;top:537px;width:11px;height:11px;border:1px solid #4a4a4a;border-radius:2px;background:#fff"></div>
<svg class="a" style="left:923px;top:538px" width="9" height="9" viewBox="0 0 9 9"><path d="M0,0 H6 V1.500 H0 Z M3,0 H6 V4 H8 L4.500,8 L1,4 H3 Z" fill="#000"/></svg>
<div class="a" style="left:515px;top:326px;width:1px;height:372px;background:#b9b9b9"></div>
<div class="a" style="left:516px;top:683px;width:421px;height:15px;background:#efefef"></div>
<div class="a" style="left:533px;top:683px;width:276px;height:14px;border:1px solid #8e8e8e;border-radius:3px;background:linear-gradient(#f6f6f6 0%,#e9e9e9 48%,#d4d4d4 52%,#c6c6c6 100%);box-shadow:inset 0 0 0 1px rgba(255,255,255,.6)"></div>
<div class="a" style="left:668px;top:687px;width:1px;height:6px;background:#555"></div>
<div class="a" style="left:670px;top:687px;width:1px;height:6px;background:#555"></div>
<div class="a" style="left:672px;top:687px;width:1px;height:6px;background:#555"></div>
<svg class="a" style="left:521px;top:686px" width="5" height="8"><path d="M4.500,0.300 L0.500,3.800 L4.500,7.300 Z" fill="#222"/></svg>
<svg class="a" style="left:928px;top:686px" width="5" height="8"><path d="M0.500,0.300 L4.500,3.800 L0.500,7.300 Z" fill="#222"/></svg>
<div class="a" style="left:20px;top:679px;width:13px;height:13px;border:1px solid #8e8f8f;background:#f4f4f4"></div>
<div class="a" style="left:22px;top:681px;width:9px;height:9px;border:1px solid #e3e5e8;background:linear-gradient(135deg,#c9cdd2 0%,#e4e6e8 55%,#f6f6f6 100%)"></div>
<svg class="a" style="left:22px;top:681px" width="10" height="10" viewBox="0 0 10 10"><path d="M1.500,4.500 L4,8 L8.500,1" fill="none" stroke="#35459a" stroke-width="2"/></svg>
<div class="t" style="left:36px;top:679px;letter-spacing:-.2px">Show lines:</div>
<div class="a" style="left:110px;top:680px;width:12px;height:12px;border:1px solid #8a8c8e;border-radius:50%;background:linear-gradient(135deg,#c3c8cd 10%,#e6e8ea 50%,#fafafa 85%);box-shadow:inset 0 0 0 1px rgba(255,255,255,.55)"></div>
<div class="a" style="left:112.5px;top:682.5px;width:7px;height:7px;border-radius:50%;background:radial-gradient(circle at 45% 40%,#6fd2f5 0%,#2478be 30%,#0f3f78 62%,#0a2548 100%)"></div>
<div class="t" style="left:126px;top:679px">always</div>
<div class="a" style="left:171px;top:680px;width:12px;height:12px;border:1px solid #8a8c8e;border-radius:50%;background:linear-gradient(135deg,#c3c8cd 10%,#e6e8ea 50%,#fafafa 85%);box-shadow:inset 0 0 0 1px rgba(255,255,255,.55)"></div>
<div class="t" style="left:187px;top:679px;letter-spacing:-.1px">based on selection</div>
<div class="a" style="left:2px;top:711px;width:949px;height:21px;background:#ece9d8;border-top:1px solid #b5b3a6"></div>
<div class="a" style="left:2px;top:711px;width:57px;height:21px;background:#fff;border-right:1px solid #b5b3a6"></div>
<div class="a" style="left:59px;top:712px;width:65px;height:20px;background:#efede0;border-right:1px solid #d2cfc0"></div>
<div class="t" style="left:6px;top:714px;letter-spacing:-.1px">Overview</div>
<div class="t" style="left:63px;top:714px;color:#7f776c;letter-spacing:-.4px">References</div>
</body></html>
